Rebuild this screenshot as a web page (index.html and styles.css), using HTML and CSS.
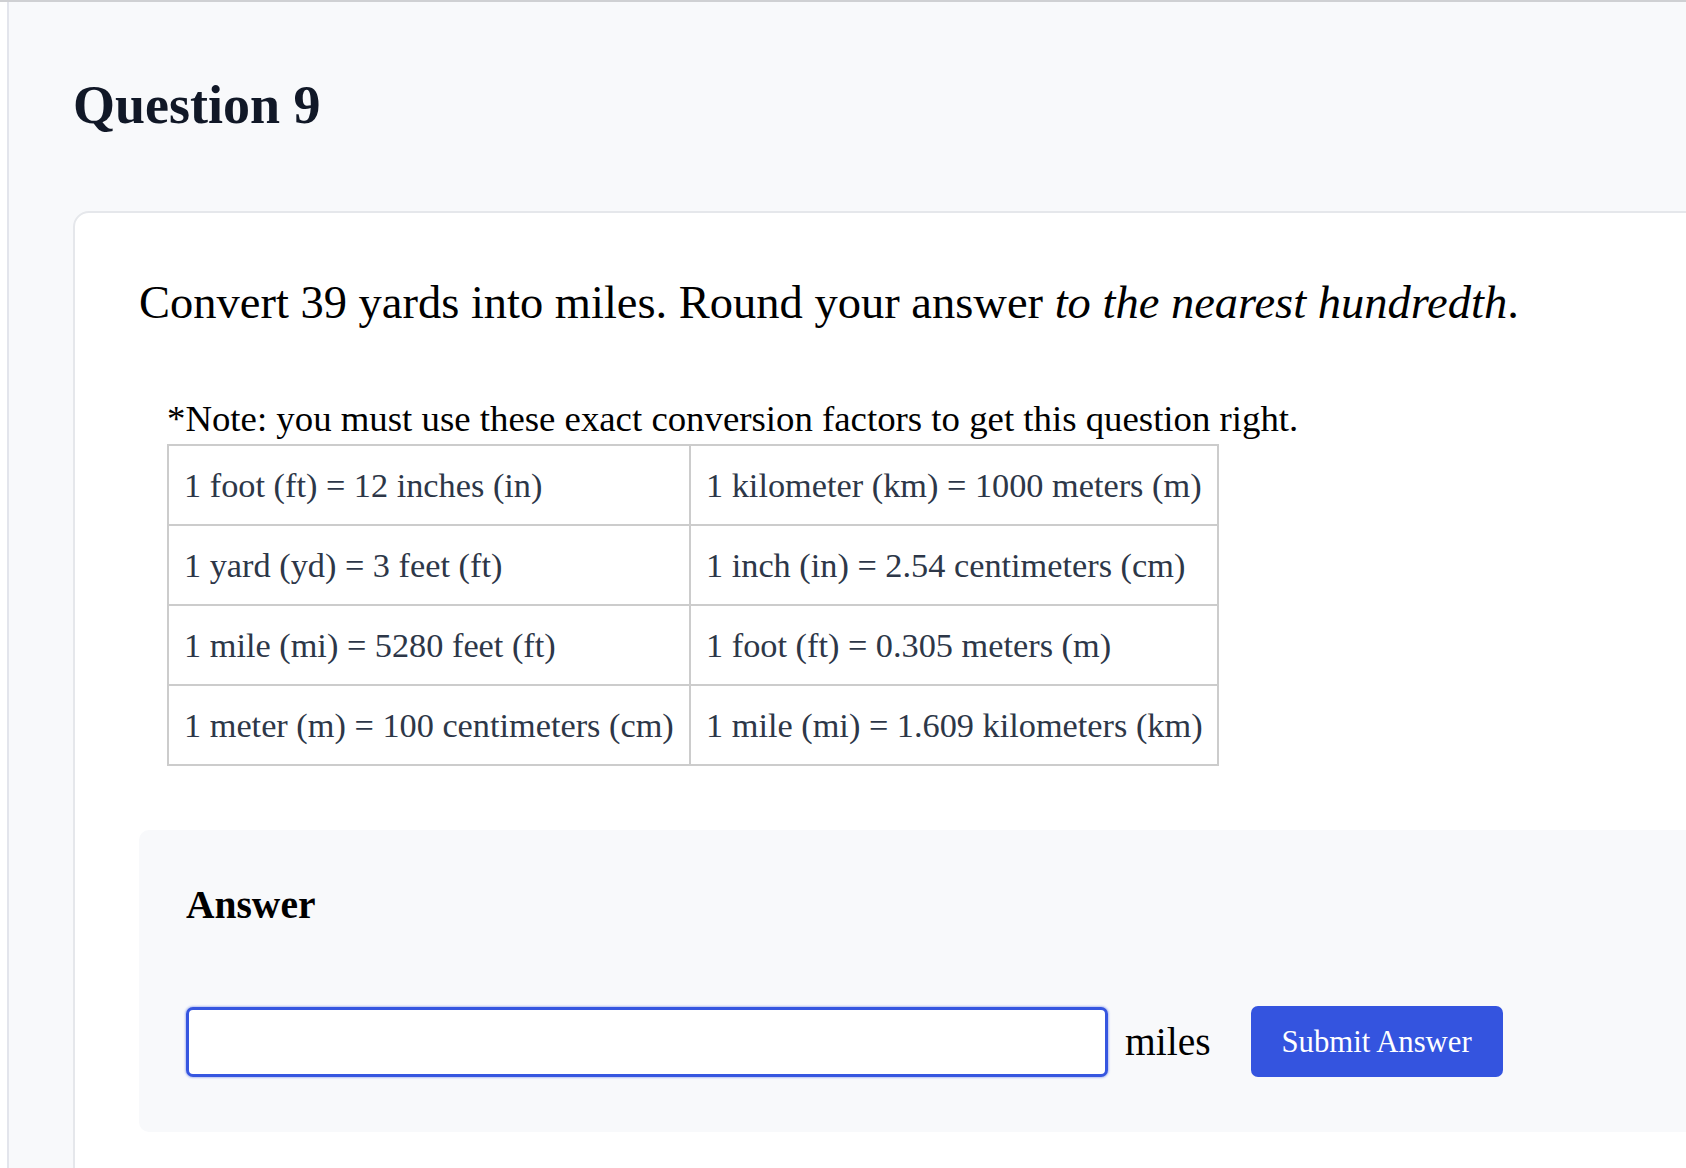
FILE: index.html
```html
<!DOCTYPE html>
<html lang="en">
<head>
<meta charset="utf-8">
<title>Question 9</title>
<link rel="stylesheet" href="styles.css">
</head>
<body>
<main class="page">
  <h1 class="title">Question 9</h1>
  <section class="card">
    <p class="prompt">Convert 39 yards into miles. Round your answer <em>to the nearest hundredth</em>.</p>
    <div class="factors">
      <p class="note">*Note: you must use these exact conversion factors to get this question right.</p>
      <table class="conv">
        <tr><td class="c1">1 foot (ft) = 12 inches (in)</td><td>1 kilometer (km) = 1000 meters (m)</td></tr>
        <tr><td class="c1">1 yard (yd) = 3 feet (ft)</td><td>1 inch (in) = 2.54 centimeters (cm)</td></tr>
        <tr><td class="c1">1 mile (mi) = 5280 feet (ft)</td><td>1 foot (ft) = 0.305 meters (m)</td></tr>
        <tr><td class="c1">1 meter (m) = 100 centimeters (cm)</td><td>1 mile (mi) = 1.609 kilometers (km)</td></tr>
      </table>
    </div>
    <div class="answer">
      <h2 class="answer-title">Answer</h2>
      <div class="answer-row">
        <input class="answer-input" type="text" aria-label="Answer">
        <span class="unit">miles</span>
        <button class="submit" type="button">Submit Answer</button>
      </div>
    </div>
  </section>
</main>
</body>
</html>
```
FILE: styles.css
```css
html, body {
  margin: 0;
  padding: 0;
  height: 100%;
  overflow: hidden;
}
body {
  background: #ffffff;
  border-top: 2px solid #cfd0d3;
  padding-left: 7px;
  box-sizing: border-box;
  font-family: "Liberation Serif", "Times New Roman", serif;
  color: #000;
}
.page {
  border-left: 2px solid #e3e5ec;
  background: #f8f9fb;
  min-height: 100%;
  padding: 73px 0 0 64px;
  box-sizing: border-box;
  overflow: hidden;
}
.title {
  margin: 0;
  font-size: 54px;
  line-height: 60px;
  font-weight: 700;
  color: #111827;
}
.card {
  margin: 76px -200px 0 0;
  background: #ffffff;
  border: 2px solid #e5e7eb;
  border-radius: 16px;
  padding: 60px 0 120px 64px;
}
.prompt {
  margin: 0;
  font-size: 46.5px;
  line-height: 60px;
  color: #000;
}
.prompt em {
  font-style: italic;
}
.factors {
  margin: 65px 0 0 28px;
}
.note {
  margin: 0 0 4px 0;
  font-size: 36.8px;
  line-height: 42px;
}
.conv {
  border-collapse: collapse;
  width: 1052px;
  table-layout: fixed;
  color: #2d3748;
  font-size: 34.3px;
  line-height: 45px;
}
.conv td {
  border: 2px solid #cccccc;
  height: 78px;
  padding: 0 15px;
  vertical-align: middle;
  white-space: nowrap;
}
.conv td.c1 {
  width: 490px;
}
.answer {
  margin: 64px 0 0 0;
  background: #f8f9fb;
  border-radius: 10px;
  padding: 52px 0 55px 47px;
}
.answer-title {
  margin: 0;
  font-size: 39.5px;
  line-height: 46px;
  font-weight: 700;
  color: #000;
}
.answer-row {
  margin-top: 78px;
  display: flex;
  align-items: center;
}
.answer-input {
  box-sizing: border-box;
  width: 922px;
  height: 70px;
  border: 3px solid #3656e0;
  border-radius: 7px;
  background: #fff;
  box-shadow: 0 0 2px 1px rgba(54, 86, 224, 0.35);
  outline: none;
  font-family: inherit;
  font-size: 30px;
  padding: 0 12px;
}
.unit {
  margin-left: 17px;
  font-size: 39.5px;
  color: #000;
}
.submit {
  margin-left: 40px;
  box-sizing: border-box;
  width: 252px;
  height: 71px;
  background: #3454df;
  color: #fff;
  border: none;
  border-radius: 7px;
  font-family: "Liberation Serif", "Times New Roman", serif;
  font-size: 30.7px;
  padding: 2px 0 0 0;
}
```
